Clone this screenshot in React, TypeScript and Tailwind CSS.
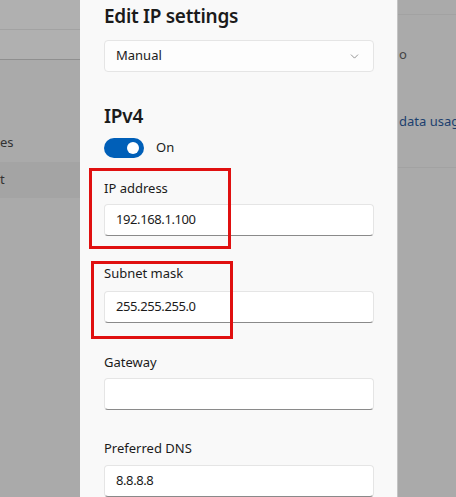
import { ChevronDown } from "lucide-react";

const font = { fontFamily: '"Segoe UI", "Noto Sans", sans-serif' };

function Field({ label, value, labelTop, inputTop }: { label: string; value: string; labelTop: string; inputTop: string }) {
  return (
    <div className={labelTop}>
      <div className="text-[13px] leading-[20px] text-[#1b1b1b]">{label}</div>
      <div
        className={`${inputTop} h-[32px] w-[270px] rounded-[4px] border border-[#e5e5e5] border-b-[#8a8a8a] bg-white px-[11px] flex items-center text-[13px] tracking-[-0.4px] text-[#1b1b1b]`}
      >
        {value}
      </div>
    </div>
  );
}

export default function App() {
  return (
    <div className="w-[456px] h-[497px] overflow-hidden flex bg-[#aaaaaa] relative" style={font}>
      {/* dimmed settings page, left */}
      <div className="w-[80px] shrink-0 flex flex-col text-[13px] text-[#333]">
        <div className="h-[30px] bg-[#b0b0b0] border-b border-[#a2a2a2]" />
        <div className="h-[30px] bg-[#b0b0b0] border-b border-[#8f8f8f]" />
        <div className="h-[65px]" />
        <div className="h-[36px] flex items-center">es</div>
        <div className="h-[36px] flex items-center bg-[#a4a4a4] mt-[1px]">t</div>
      </div>

      {/* dialog */}
      <div className="w-[318px] shrink-0 h-full bg-[#f9f9f9] border-r border-[#c4c4c4] pl-[24px] pt-[2px] flex flex-col">
        <div className="text-[19px] leading-[28px] font-semibold tracking-[-0.3px] text-[#1b1b1b]">Edit IP settings</div>
        <div className="mt-[10px] h-[32px] w-[270px] rounded-[4px] border border-[#e5e5e5] bg-[#fdfdfd] pl-[11px] pr-[12px] flex items-center justify-between text-[13px] text-[#1b1b1b]">
          <span>Manual</span>
          <ChevronDown size={13} strokeWidth={1.2} className="text-[#5d5d5d]" />
        </div>

        <div className="mt-[30px] text-[19px] leading-[28px] font-semibold tracking-[-0.2px] text-[#1b1b1b]">IPv4</div>
        <div className="mt-[8px] flex items-center gap-[12px]">
          <div className="w-[40px] h-[20px] rounded-full bg-[#005fb8] flex items-center justify-end pr-[5px]">
            <div className="w-[12px] h-[12px] rounded-full bg-white" />
          </div>
          <span className="text-[13px] text-[#1b1b1b]">On</span>
        </div>

        <Field label="IP address" value="192.168.1.100" labelTop="mt-[20px]" inputTop="mt-[6px]" />
        <Field label="Subnet mask" value="255.255.255.0" labelTop="mt-[27px]" inputTop="mt-[8px]" />
        <Field label="Gateway" value="" labelTop="mt-[29px]" inputTop="mt-[6px]" />
        <Field label="Preferred DNS" value="8.8.8.8" labelTop="mt-[28px]" inputTop="mt-[7px]" />
      </div>

      {/* dimmed settings page, right */}
      <div className="flex-1 flex flex-col text-[13px] text-[#333] pl-[1px]">
        <div className="h-[15px] border-b border-[#a2a2a2] -ml-[1px]" />
        <div className="h-[49px] flex items-end text-[#444]">o</div>
        <div className="h-[67px] flex items-end text-[#1c3f6e] whitespace-nowrap">data usage</div>
        <div className="h-[37px] border-b border-[#a2a2a2] -ml-[1px]" />
      </div>

      {/* red highlight boxes */}
      <div className="absolute left-[89px] top-[168px] w-[142px] h-[81px] border-[3px] border-[#e01010]" />
      <div className="absolute left-[91px] top-[261px] w-[142px] h-[78px] border-[3px] border-[#e01010]" />
    </div>
  );
}
